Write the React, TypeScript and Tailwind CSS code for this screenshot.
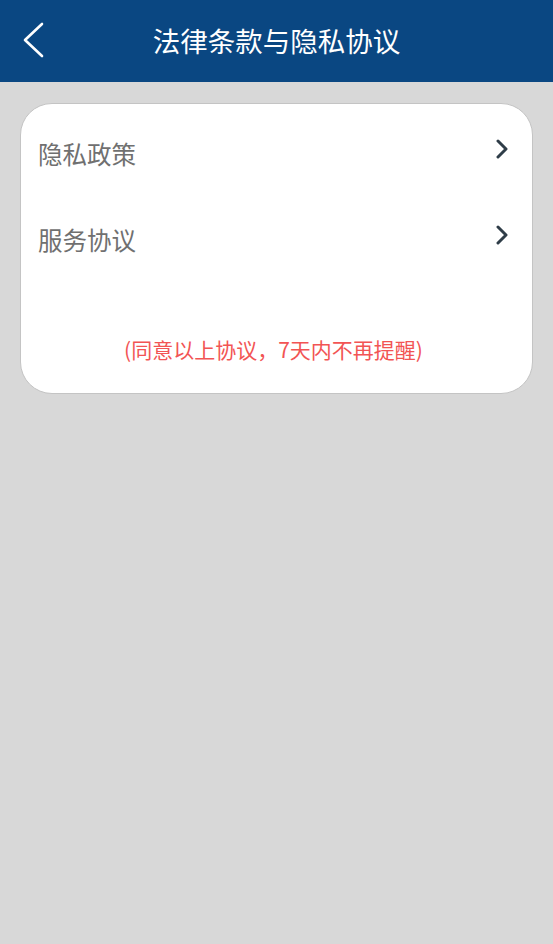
export default function App() {
  return (
    <div
      className="min-h-[944px] bg-[#d8d8d8]"
      style={{ fontFamily: '"Noto Sans CJK SC", "Noto Sans", sans-serif' }}
    >
      <header className="relative flex h-[82px] items-center justify-center bg-[#0a4782]">
        <button className="absolute left-[22px] top-[22px] flex h-[36px] w-[24px] items-center">
          <svg width="24" height="36" viewBox="0 0 24 36" fill="none">
            <path d="M20 2 L3 18 L20 34" stroke="#ffffff" strokeWidth="2.6" strokeLinecap="round" strokeLinejoin="round" />
          </svg>
        </button>
        <h1 className="text-[27.5px] leading-none text-white">法律条款与隐私协议</h1>
      </header>

      <div className="px-[20px] pt-[21px]">
        <div className="h-[291px] rounded-[32px] border border-[#c4c4c4] bg-white pl-[17px] pr-[23px] pt-[7px]">
          <div className="flex h-[86px] items-center justify-between">
            <span className="text-[24.5px] text-[#707070]">隐私政策</span>
            <Chevron />
          </div>
          <div className="flex h-[86px] items-center justify-between">
            <span className="text-[24.5px] text-[#707070]">服务协议</span>
            <Chevron />
          </div>
          <p className="mt-[56px] text-center text-[21px] leading-none text-[#f25454]">
            (同意以上协议，7天内不再提醒)
          </p>
        </div>
      </div>
    </div>
  );
}

function Chevron() {
  return (
    <svg width="14" height="20" viewBox="0 0 14 20" fill="none" className="-mt-[10px]">
      <path d="M3 2 L11 10 L3 18" stroke="#2f3d48" strokeWidth="3" strokeLinecap="round" strokeLinejoin="round" />
    </svg>
  );
}
